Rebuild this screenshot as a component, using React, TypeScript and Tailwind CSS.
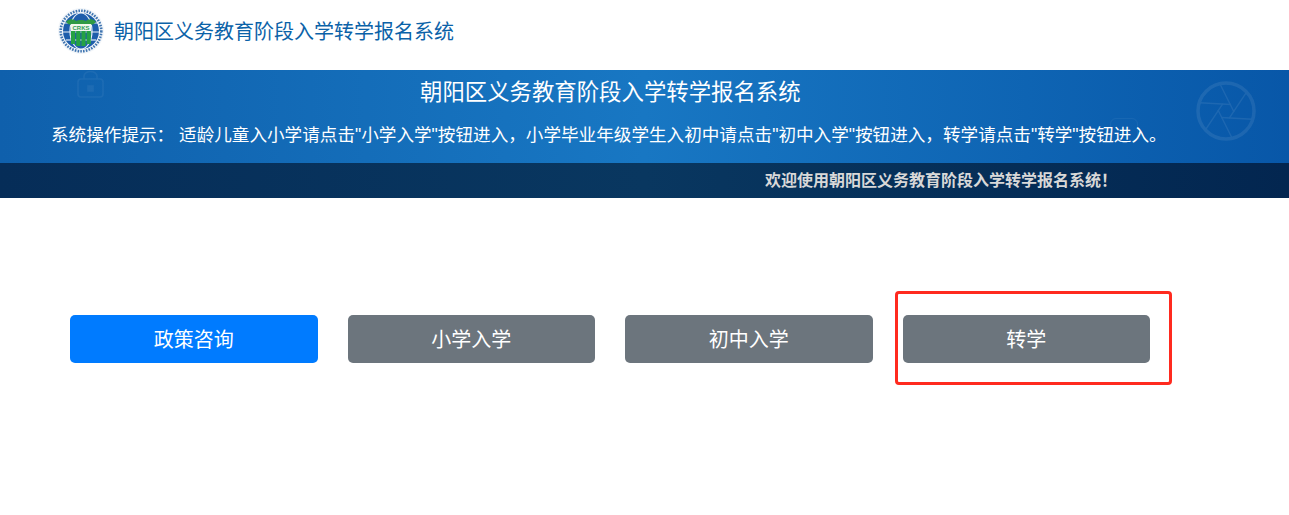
// Enrolment landing page: logo header, blue banner, four entry buttons.
// The red box round the last button is an annotation that lies over the page.

const FONT = "font-['Liberation_Sans','Noto_Sans_CJK_SC',sans-serif]";

function Logo() {
  return (
    <svg width="46" height="46" viewBox="0 0 46 46" className="shrink-0">
      <circle cx="23" cy="23" r="23" fill="#f1f5f9" />
      <circle cx="23" cy="23" r="20.3" fill="none" stroke="#3f74b0" strokeWidth="2.6" strokeDasharray="1.6 1.2" />
      <circle cx="23" cy="23" r="18" fill="#1d5dab" />
      <g fill="none" stroke="#e8f0f8" strokeWidth="1.2">
        <ellipse cx="23" cy="23" rx="11" ry="18" />
        <line x1="5" y1="15" x2="41" y2="15" />
        <line x1="5" y1="24" x2="41" y2="24" />
        <line x1="8" y1="32" x2="38" y2="32" />
      </g>
      {/* green capital with the columns below it */}
      <path d="M8 14 C11 10 16 11 18 13 C20 11.5 26 11.5 28 13 C30 11 35 10 38 14 C35 17.5 32 17 31 16 L15 16 C14 17 11 17.5 8 14 Z" fill="#2f9a44" />
      <rect x="13" y="16" width="20" height="7" fill="#f1f7ee" />
      <text x="23" y="22" textAnchor="middle" fontSize="6" fontWeight="700" fill="#2f9a55">CRKS</text>
      <g fill="#25a244">
        <rect x="13" y="23" width="4.2" height="13" />
        <rect x="18.2" y="23" width="4.2" height="15" />
        <rect x="23.4" y="23" width="4.2" height="15" />
        <rect x="28.6" y="23" width="4.2" height="13" />
      </g>
    </svg>
  );
}

function Aperture() {
  return (
    <svg width="60" height="60" viewBox="-30 -30 60 60" fill="none" stroke="#ffffff" className="opacity-[0.08]">
      <circle r="28" strokeWidth="3.5" />
      <g strokeWidth="1.4">
        {[0, 60, 120, 180, 240, 300].map((a) => (
          <line key={a} x1="-6" y1="-27" x2="8" y2="1" transform={`rotate(${a})`} />
        ))}
      </g>
    </svg>
  );
}

function Lock() {
  return (
    <svg width="27" height="27" viewBox="0 0 27 27" fill="none" stroke="#ffffff" strokeWidth="1.6" className="opacity-[0.05]">
      <rect x="1" y="8" width="25" height="18" rx="3" />
      <path d="M7 8 V5 a6.5 4.5 0 0 1 13 0 V8" />
      <rect x="11" y="15" width="5" height="5" fill="#ffffff" />
    </svg>
  );
}

function EntryButton({ label, primary }: { label: string; primary?: boolean }) {
  return (
    <button
      type="button"
      className={`h-12 w-[247.5px] shrink-0 rounded-[5px] pt-0.5 text-[20px] text-white ${
        primary ? "bg-[#007bff]" : "bg-[#6c757d]"
      }`}
    >
      {label}
    </button>
  );
}

export default function App() {
  return (
    <div className={`relative h-[515px] w-full overflow-hidden bg-white ${FONT}`}>
      {/* Logo row */}
      <header className="flex h-[70px] items-start gap-2.5 pl-[58px] pt-2">
        <Logo />
        <h1 className="pt-2 text-[20px] leading-[32px] text-[#0b62a8]">朝阳区义务教育阶段入学转学报名系统</h1>
      </header>

      {/* Banner */}
      <section className="relative h-[128px] bg-gradient-to-r from-[#0f60ac] via-[#1877c3] to-[#0857a8] text-white">
        <div className="absolute left-[77px] top-[1px]">
          <Lock />
        </div>
        <div className="absolute left-[1110px] top-[48px] h-[24px] w-[28px] rounded-[6px] border border-white/5" />
        <div className="absolute right-[33px] top-[11px]">
          <Aperture />
        </div>
        <div className="relative h-[93px]">
          <h2 className="pl-[420px] pt-[8px] text-[22.4px] leading-[30px]">朝阳区义务教育阶段入学转学报名系统</h2>
          <p className="mt-[12px] whitespace-nowrap pl-[51px] text-[17.6px] leading-[30px]">
            系统操作提示： 适龄儿童入小学请点击"小学入学"按钮进入，小学毕业年级学生入初中请点击"初中入学"按钮进入，转学请点击"转学"按钮进入。
          </p>
        </div>
        <div className="flex h-[35px] items-center bg-gradient-to-r from-[#062d58] via-[#093760] to-[#032650] pl-[765px]">
          <span className="text-[16px] font-bold leading-none text-[#d8d8d8]">欢迎使用朝阳区义务教育阶段入学转学报名系统！</span>
        </div>
      </section>

      {/* Entry buttons */}
      <main className="flex gap-[30px] pl-[70px] pt-[117px]">
        <EntryButton label="政策咨询" primary />
        <EntryButton label="小学入学" />
        <EntryButton label="初中入学" />
        <EntryButton label="转学" />
      </main>

      {/* Annotation */}
      <div className="pointer-events-none absolute left-[895px] top-[291px] h-[94px] w-[277px] rounded-[4px] border-[3px] border-[#ff2a1f]" />
    </div>
  );
}
